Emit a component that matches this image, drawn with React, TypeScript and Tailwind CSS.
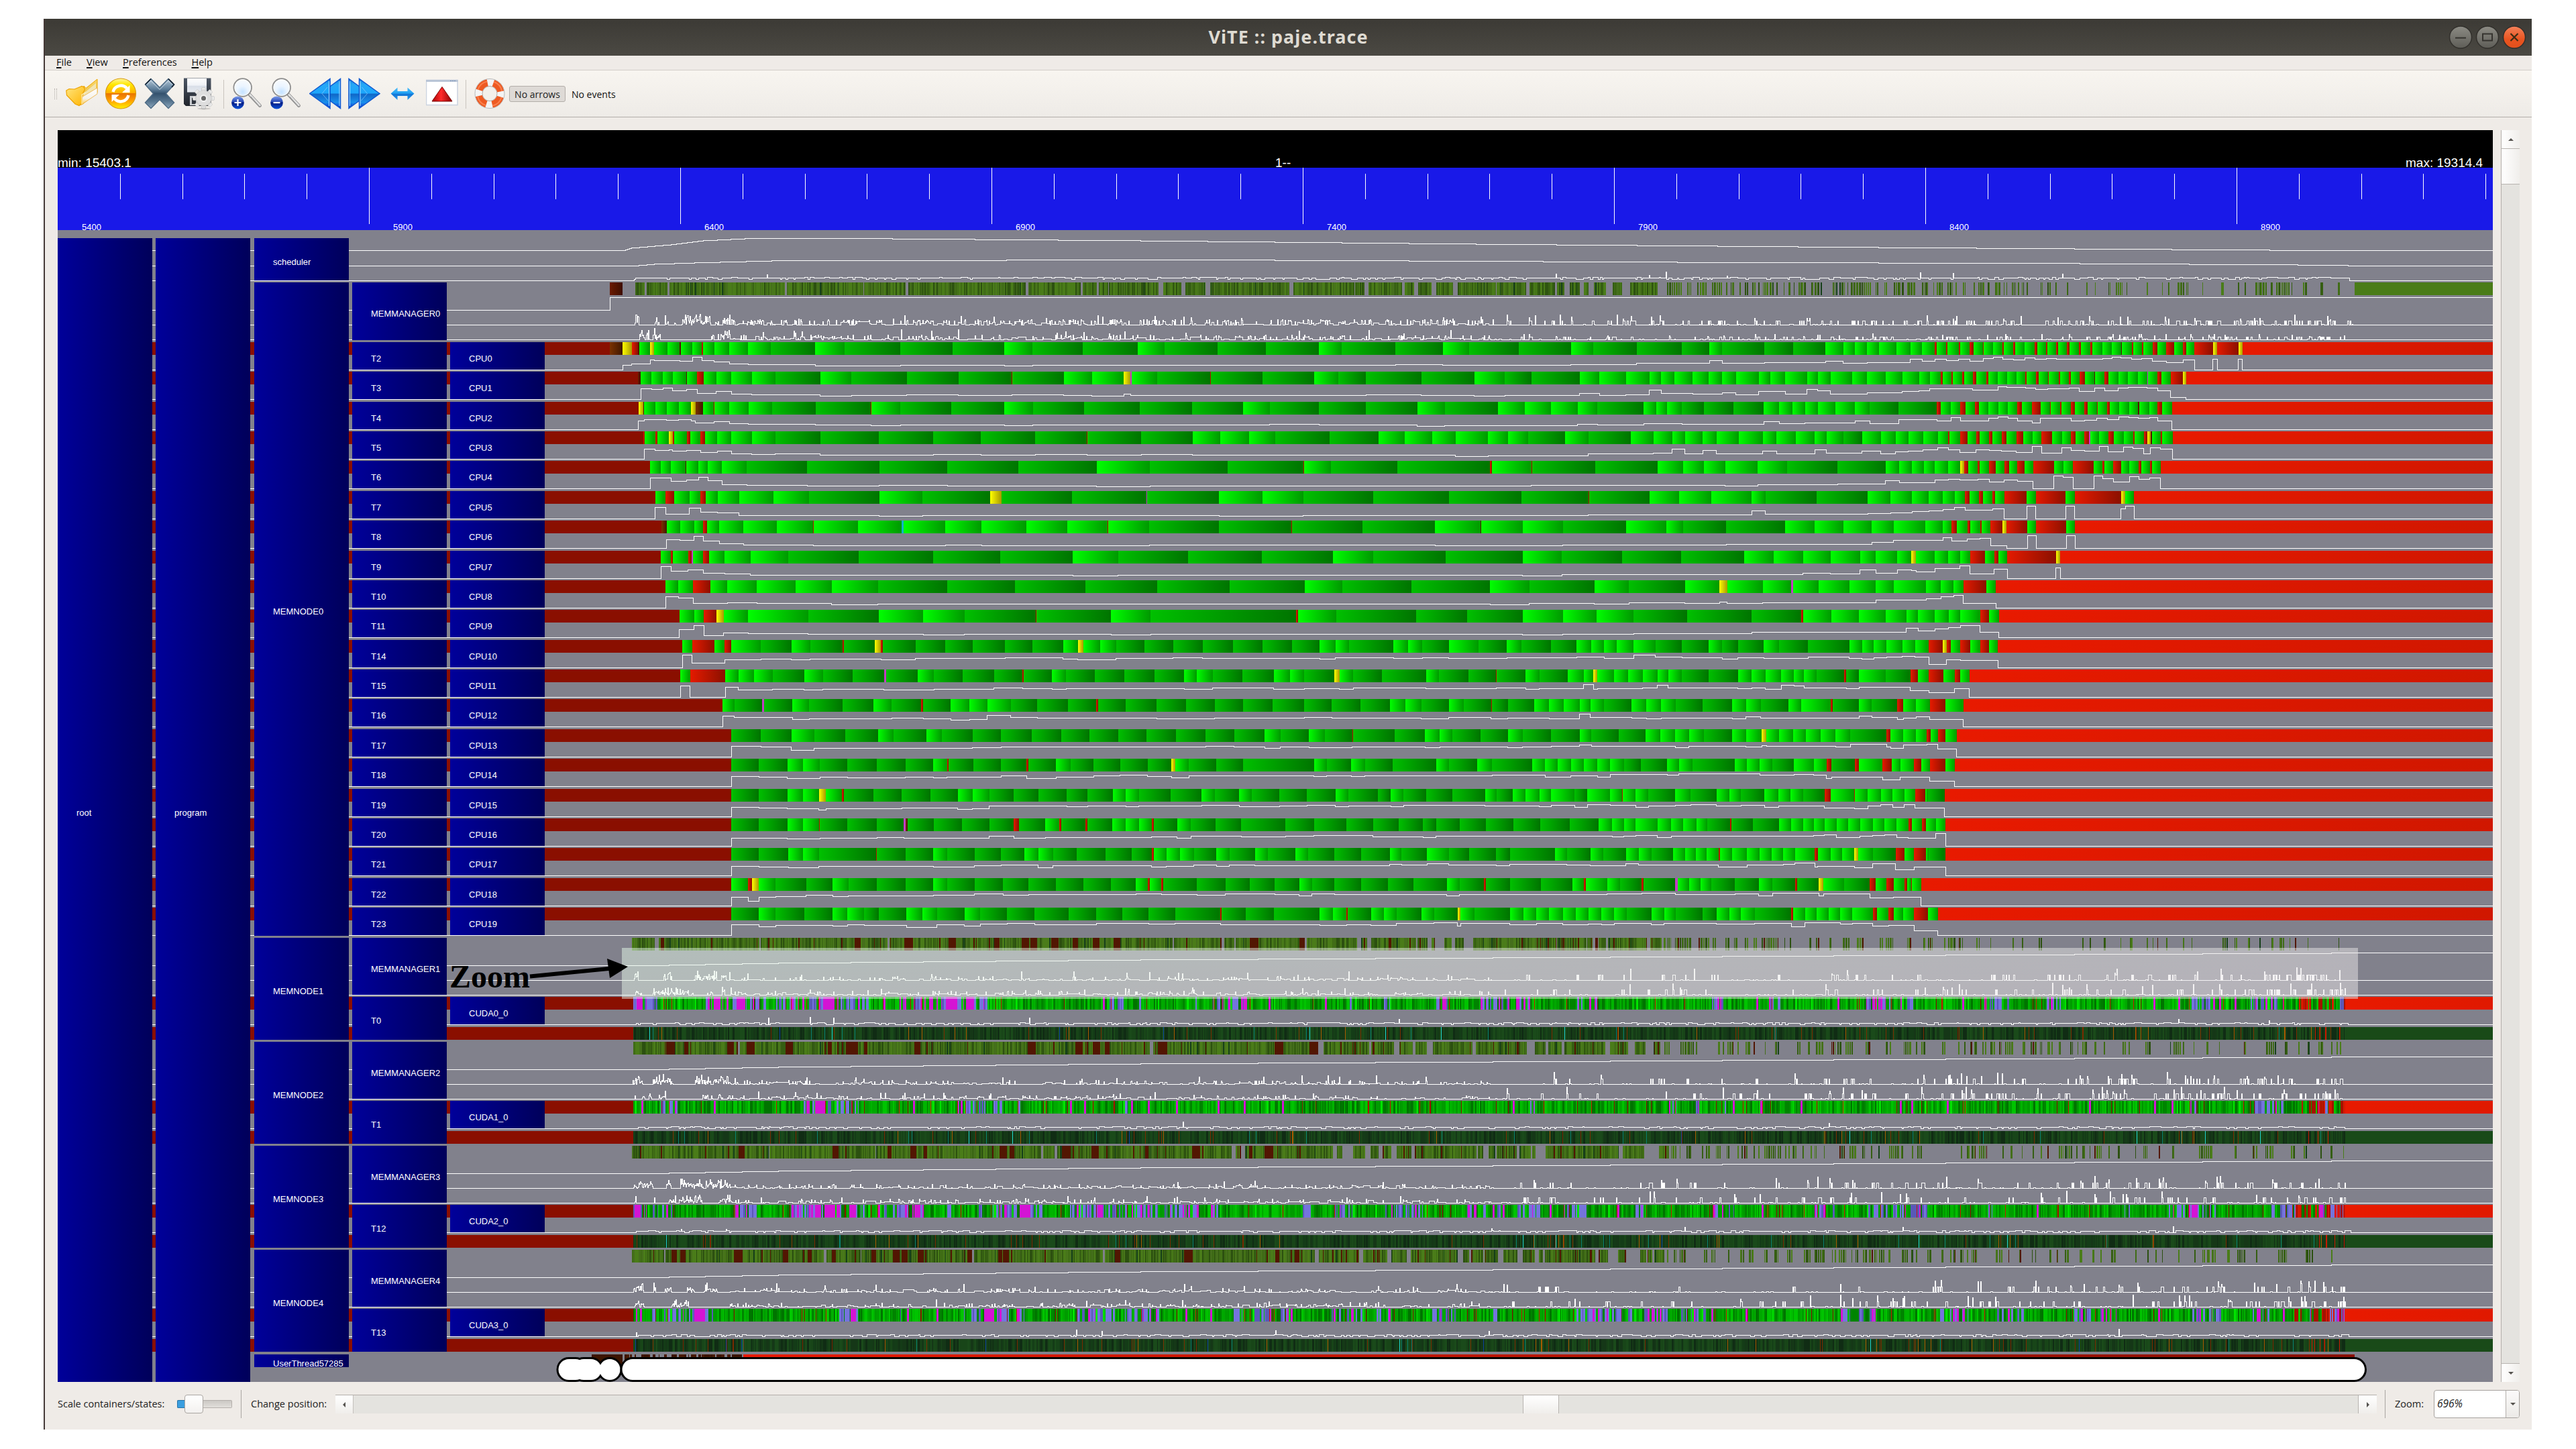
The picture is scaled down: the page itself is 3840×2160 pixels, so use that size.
import React from "react";

/* ------------------------------------------------------------------ */
/* Helpers                                                             */
/* ------------------------------------------------------------------ */

type Seg = { c: string; x: number; h?: number };

// Deterministic generator for the densely packed event rows.
function rng(seed: number) {
  let a = seed * 7919 + 13;
  return () => {
    a = (a + 0x6d2b79f5) | 0;
    let t = Math.imul(a ^ (a >>> 15), 1 | a);
    t = (t + Math.imul(t ^ (t >>> 7), 61 | t)) ^ t;
    return ((t ^ (t >>> 14)) >>> 0) / 4294967296;
  };
}

// "g146/9" = state g starting at 146, load curve moves to level 9.
function parse(origin: number, zoom: number, s: string): Seg[] {
  if (!s) return [];
  return s.split(" ").map((t) => {
    const [a, b] = t.slice(1).split("/");
    return { c: t[0], x: origin + Number(a) / zoom, h: b === undefined ? undefined : Number(b) };
  });
}
const early = (s: string) => parse(860, 1.568, s);
const mid = (s: string) => parse(860, 0.68174, s);
const late = (s: string) => parse(2900, 1.7422, s);

const LEFT = 86;
const RIGHT = 3716;

const FILLS: Record<string, string> = {
  g: "url(#gg)",
  d: "url(#gd)",
  r: "url(#gr)",
  m: "url(#gm)",
  b: "url(#gb)",
  y: "url(#gy)",
  v: "#c43cc4",
  c: "#10b4c8",
  R: "url(#gR)",
};

const CPU: { t: string; c: string; segs: Seg[] }[] = [
  {
    t: "T2", c: "CPU0",
    segs: [
      ...early("b77 y107/7 r128/9 m142 g146 y171/15 g181/14 g211 m240/13 g243 g270/19 r292/14 g295 g321/12 g356/9 g400/8 d453 g557/6 d626 d756/7 d878 g999/6 d1065/7 d1182 g1311 d1374 d1497"),
      ...mid("d700 g754 d777 d832/8 g880/7 d907 d957 g1010/8 d1033 d1077/10 d1123 g1151/14 d1164/10 d1207/11 d1236 g1269/13 g1287/10 g1299 g1311/11 g1323 g1341 g1355/16 g1367/13 r1380/16 g1382"),
      ...late("r2/14 g6 r34/16 g38 r63/13 g73 r98/17 g100 g124/19 r148/16 g152 r176/15 g182 g206/18 r232/16 g238 r262/17 g265 r288/16 g293 r316 g322 r346 g352 r376 g382 g408/17 g432/19 m456/18 g458 r484/16 g488 r510/17 g514 r538/13 g551 r574/11 g594 r617/15 g625 r647/0 y695/16 r706/0 y761/16 R771/0"),
    ],
  },
  {
    t: "T3", c: "CPU1",
    segs: [
      ...early("m142 g149/16 g174/15 g201/17 g224/13 m256 g257/15 r281/9 g297 g326/12 g361/8 g409/7 d464 g569/5 d642/6 d771/7 d892/6 r1016/7 d1018 g1138/6 g1204/5 y1278/8 v1294/6 g1296 d1356 r1480 d1482"),
      ...mid("d697 g749 d774 d802/7 d858/6 g912/5 d943/6 d970 g1019/9 g1039/6 g1066/7 g1090/14 g1102/9 g1115 g1134/8 g1150 g1164/10 g1178/7 g1201/12 g1213 g1228/8 g1250/15 g1261/13 g1274/8 g1296 g1311/10 g1330 g1347/12 g1364/13 g1375/16 r1386 g1388"),
      ...late("r16/16 g19 r44 g49 r71/14 g80 r106 g112 g136/19 g160/18 g185 r208/17 g211 r235/15 g242 r266/16 g269 r294 g298 r321/17 g326 r348/12 g362 m387/17 g389 r413/13 g423 g449/17 g474/18 g500 v524/17 g526 r551/13 g561 r585/3 y617 R625/0"),
    ],
  },
  {
    t: "T4", c: "CPU2",
    segs: [
      ...early("y144/13 m155 g157/15 g183 g210/14 g238/15 y267/13 b277/10 g295 r320 g321/12 g356/9 g401/8 d456 d558/7 r687/6 g688 d756/7 d875 g999/6 d1066/7 d1185 d1316 d1438 g1557"),
      ...mid("d704/8 d754/7 d802 g854/5 d882/6 g936 g963 g990 g1017/8 d1037/7 g1084/9 g1097 g1108 d1123/8 d1145 d1175 g1206/12 g1222/9 g1235 g1248/10 g1261 g1279 g1299/13 d1314/9 d1343/15 r1382/13 g1386"),
      ...late("g14/18 r39/13 g52 r77 g87 g112/17 g137/19 g162/17 r187/13 g199 r225/10 g247/17 r272 g274 r298 g301 r326/13 g336 r361/14 g369 r393/17 g395 r420/15 g427 g451/19 g477/18 m500/17 g503 g530/18 r551/13 g563 R588/0"),
    ],
  },
  {
    t: "T5", c: "CPU3",
    segs: [
      ...early("r155 g158/15 r183/13 g188 y215/14 r224/12 g227 r257/13 g265 r289/10 g299 g328/12 g361/8 g409/7 d464/8 d569/6 d706 d833/7 d944/6 d1071/7 r1192/6 d1194 d1319/7 g1439/6 g1504"),
      ...mid("g683 d710 d765 g815 g841 g869 g893/4 g926/5 g946 d967 g1004 d1028/8 g1071 g1094/9 g1113/15 g1126/8 g1144/13 g1158/8 g1181 g1205/12 g1219/8 g1239 g1258/14 g1270/9 d1287 g1306/12 g1325/8 g1340/11 g1353/12 g1368/14 g1383/17"),
      ...late("r7/14 g10 r38/10 g57 r80/14 g89 r114/13 g122 r146/12 g159 r184/10 g202 g226/19 r250/9 g277 g303/17 r326/13 g338 r361/12 v373 g376 g399/19 r423/11 g437 g463/18 r487/16 g491 r515/8 y524 m533/17 g537 r559/15 g563 R590/0"),
    ],
  },
  {
    t: "T6", c: "CPU4",
    segs: [
      ...early("g171/16 g196 g220/11 m254 g256/13 g284/17 g306/12 g339/6 d397/5 d538/4 d707/5 d866/4 d1032 g1215/3 d1339/4 d1521"),
      ...mid("r738 g739 d766 d834 r928 g930 r970/5 d971 d1035 g1098 g1124 g1145 g1167/4 g1200/6 d1230 d1281/7 g1330/12 g1344/9 g1357 g1369 g1380/13"),
      ...late("g7/14 y38/13 r49 g59 r84/14 g89 r114/10 g131 r153/13 g165 r187/11 g205 r228/0 g282/19 g306/17 r331/0 g385/19 r408/15 g413 r436/10 g456 g478/18 r502/14 g509 r531/16 g537 R559/0"),
    ],
  },
  {
    t: "T7", c: "CPU5",
    segs: [
      ...early("g183/17 r207/7 g227 g263/16 r289/10 g301 g329/9 g379/5 g459 d543 g707/4 d808/5 y966 d993 d1157 v1331 d1333 g1501/4"),
      ...mid("g697 d738/5 d809 d886 d960 r1028/6 d1029 g1090 g1120 g1153 g1194/12 d1208/7 d1260 g1312/8 g1335/9 g1357/11 g1374/12 g1388/14"),
      ...late("g24/17 r51/13 g63 r87 g98 r122/15 g129 r153/0 g211/19 r235/0 g312/19 r336/0 y456/15 g467/19 R490/0"),
    ],
  },
  {
    t: "T8", c: "CPU6",
    segs: [
      ...early("b198 g210/13 g241/12 g274/18 r295/11 g304 g333/7 g389/5 g467 r552/4 g554 g657 c759 g763 g861/5 g946/4 g1051 g1146 r1240 g1242 d1338/5 d1501"),
      ...mid("r726 d727 d798 g872/4 m918 g919 g961 d1002/5 g1066 g1107 d1124 d1168/6 g1228 g1258 g1287 g1316/9 g1338/12 g1370 g1388/16"),
      ...late("r16/11 g30 r57/14 g64 r90/15 g94 r117/4 y148 r159/0 g213/19 r236/0 g314/19 R337/0"),
    ],
  },
  {
    t: "T9", c: "CPU7",
    segs: [
      ...early("g196/18 r220/11 g224 r260/13 v268 g271 r295/8 g309 g345/7 g406/5 d494 d659 d833 d989 g1159/4 d1265/5 d1428"),
      ...mid("d696 g768 d809 d883 g961/4 d1001/6 d1062 d1122 g1186 g1216 g1246/8 g1274/7 g1304/13 g1320/8 g1342/13 y1356/12 g1361/10 g1380/15"),
      ...late("g7/15 g38/19 r64/7 g103 r127/14 g138 r161/0 y287/16 R298/0"),
    ],
  },
  { t: "T10", c: "CPU8", segs: mid("g90/17 g103/15 r118/7 g136 g153/8 g183/7 g222 g259/5 d306/6 d376 d445 d517 d590 d663 g740 d778 d848 g928/5 d968/7 g1034/6 d1069/8 g1126/7 y1161/9 g1169/7 g1205/8 v1234 g1236 g1262 g1293 g1320/12 g1338 g1371/14 g1386/17 g1399/19 r1409/7 g1432 R1442/0") },
  { t: "T11", c: "CPU9", segs: mid("g104/12 g119/18 r129/3 y142 g149/7 g174/6 d235/5 g307 g352/4 d394/5 r466 d467 g543/4 d583/5 r731 g733 d772 d853 d905 g961/4 g1002/5 g1036 d1074/6 d1128 d1194/8 r1244 g1246 g1275 g1303 g1330/8 g1351/14 g1363/10 g1380/13 g1394/15 g1406/18 r1426/8 g1435 R1445/0") },
  { t: "T14", c: "CPU10", segs: mid("g107/19 r117/7 g140 r150/12 g157 d187/13 g218/12 d237/13 r270 d271 y303 r309/12 d311 d344/14 d374 d402 d435/15 d463 g494/13 y509/12 g515 g532 d548/14 d577 d606/15 d636/14 d667 d697 d727 g755/13 g771/15 d785 g830/14 g845 d859/15 g886/14 d916 g945/15 d960 d990 g1016/16 g1031 g1044/14 g1057 g1074/19 d1096/16 d1123/15 g1150 d1164/13 d1180/15 g1206/14 d1222 d1251/16 g1293/14 g1306/13 g1318/15 g1331/16 g1347/17 g1360/16 r1374/5 y1388 r1392/12 g1396 r1406/11 g1416 r1426 g1435 R1444/0") },
  { t: "T15", c: "CPU11", segs: mid("g105/17 r115/0 g151/15 g164/11 g180 d199/12 g231/11 d250/12 d280 v312/11 d314 g346 d363/12 d392 d424/14 r453/13 d454 g483/12 d497/13 d526 d556 d587 g617/12 g630 d646/14 d676 g708/12 g725 d739/13 y770 g775/12 d789/14 d818 g863/13 d876 d906 r934/14 d935 g964/12 d978/13 g1007 g1023/19 y1033/12 g1037/13 g1054 g1068 g1083/14 g1098/18 g1109/14 d1123 d1150 g1180/13 g1194/14 g1208/12 g1224/18 g1237/17 g1247/14 d1260 r1288 d1290/13 g1303/15 d1330 r1355/10 g1363 r1374/7 g1389 r1400/13 g1406 R1415/0") },
  { t: "T16", c: "CPU12", segs: mid("g148/16 d160/14 v188 d190 g219/11 d236/12 d270 g301/12 d320/13 r350 d352/12 g380/10 g399/11 g417/17 d441/14 d468/13 d499 r528 d530 d558 d589/12 d619 d648/13 d677 d707 d739/14 d767/13 d796 g826 g842 d858/12 g886/14 d901 r929/12 d930 d946/13 g973 g988/12 g1003 g1019/19 g1030/14 d1044 g1072/13 g1087/12 g1102/13 d1117 d1144 g1174/12 g1188/15 d1203/13 g1231 g1244 r1274/13 d1276 g1303/16 d1316/14 r1342/11 g1348/13 g1361/15 r1375/11 g1391 R1409/0") },
  { t: "T17", c: "CPU13", segs: mid("d157/16 d187/15 g218/10 d241/13 d273 g306 d322 g355 d371 d402/14 d431/15 d462 d492 d521 d550 d579 d609 d639/16 d668/15 g699/13 d715/15 g744/14 d760 r788/15 d789 d831 g862/14 g877/15 d890 d918 g946/14 d961/15 d990/16 g1019/18 d1031/16 d1059 g1086 g1101 g1116/14 g1130/16 d1145 g1174 g1188/15 y1204/17 g1209/16 g1222 g1236 g1249 g1264 g1279/15 d1294/19 r1331/15 g1335/13 g1348/18 g1361 r1372/19 g1376 r1383/12 g1391 R1402/0") },
  { t: "T18", c: "CPU14", segs: mid("d157/15 d185/14 g214/12 g230 d247/14 d275/13 d305 d334/14 g362/13 r376/14 d378 d403 d431/16 r457/12 d459 g487/14 d502 d525/16 d552/17 d580/15 y604/13 g608 d622/16 d650 d677 g749/15 d762/16 g787/15 d801/16 d829 g873 d886 g915 d930/17 g971 g984/14 g997 g1010/16 g1023 g1037/14 g1050/18 d1064 d1081 g1108/17 g1120/19 d1134 g1177 g1189 g1202/17 d1215 g1237/18 g1257/17 r1270/12 d1275/14 r1299 g1303 r1327/10 g1336 g1345/14 r1359 g1366 r1375/8 g1391 R1400/0") },
  { t: "T19", c: "CPU15", segs: mid("d157/14 d185/13 g214/12 g230 y246/10 g253/12 r269 d271 d301 d330/13 d359 g387/11 g402/12 d419/16 d444 d469 d498/15 d519/16 g545 g558/15 d571/16 d603 g635/17 d648 g673/15 d686 d714/16 d742/17 g771/15 d784/16 d814 g827/15 d840/17 d863 d890 g923/16 d935 g951 g964 g978/15 g990/17 d1014/14 g1027/18 g1050/17 r1062 g1063 g1076/14 d1089/16 g1116/17 d1132/18 g1158/16 g1171 d1183/17 g1207/14 g1221/16 g1233 d1246 r1268/13 g1274 r1298/12 g1299 g1312/16 g1325/18 g1337/14 g1349/18 r1360/13 g1370 d1373 R1390/0") },
  { t: "T20", c: "CPU16", segs: mid("d157/12 d185 g214/11 g230 r246 d247/12 d275 d305/13 v332/12 b334 d336 d363 d391 d419/15 r444/12 d449 g476/13 r490 d492 r517 d519 g544 g558 g571 r584/14 d586 g610/12 d624/15 d649 d675/14 d720/15 d749/16 d782 d809/14 d835 d860/13 d873/15 d897 d924 d952 d979 d1009 g1038 g1052/14 g1064/15 g1076/16 g1098/13 g1112/15 g1124 g1138 d1149 r1172/15 d1173 d1195 g1222 g1234 g1246 g1257/16 g1268/17 g1280/13 g1292 g1304/15 g1317/16 g1329/17 g1341/13 r1353/12 g1357 r1367 g1371 g1381/19 R1391/0") },
  { t: "T21", c: "CPU17", segs: mid("d157/14 d185/13 g215/12 g230 d246/14 r304 d305 d334 g362/13 d376 d404/15 d431/16 g455 g469/12 d484/15 d508 d537 d564 r584/13 g586 g599/14 g613 d627/16 g650/14 d663/16 g689/15 d702 g730 d743 d770 d797/15 g826/17 d838/16 g864/18 d886/16 d907 d934/15 d948/17 g994 d1006/16 g1030/15 d1043 g1066/18 g1079/16 d1092 g1114 g1126 g1137 g1148 r1160/13 g1162 g1174 g1189/16 g1202 g1214 g1226/17 g1238/19 r1258/13 g1261/14 g1274 g1286 y1298/12 g1302 d1317/18 r1340/9 g1349 r1359/13 g1371 d1374 R1391/0") },
  { t: "T22", c: "CPU18", segs: mid("g157/13 r174/7 y178 g185/13 d202/14 d233/16 g260/14 d276/15 d305 d334 g362/16 d376 d404/18 d433/16 d459/17 d487 d515 d543 g568/18 r580 g582 r594/17 d596 d630/16 d659/18 d684 d709/17 g734/15 d747/18 d770/17 d797 d824 d850 g884/15 d897/17 r922 d924 d948 d980 g1012 r1023 g1025 g1047/18 d1060 r1082/19 d1084 v1116/17 g1119 g1130 g1142 d1153 d1177/18 g1201/15 d1215/19 r1238 d1240 y1262/15 g1267/18 d1288 r1314/12 g1320 r1331 g1338/13 r1349 g1352 r1356 g1357 R1366/0") },
  { t: "T23", c: "CPU19", segs: mid("d157/16 g185/13 d202/15 d231 g260/14 g275/16 d292/15 d307 g335/12 g351 d366/16 g394/14 d410/17 d437/18 d465/16 d500 d528/18 d554 d581/17 d608/18 r654/16 d655 d680 d708 g755/15 g768 r782/16 d783 g807/15 g820 d833/18 g858 d871/19 y895/14 g898/18 d912 g948/16 g962 g975/18 g988 g1002/16 g1015 g1028/17 g1041/16 g1054/18 d1067 g1092/16 g1105/18 d1117 d1144 g1158/17 g1171 g1183 d1197/18 r1234/13 g1236 g1248/19 g1260 g1272 g1284/17 g1296/18 r1317/14 g1321 r1333/15 g1338 g1348 r1359/7 g1373 R1383/0") },
];

function stepPath(base: number, pts: [number, number][]) {
  let d = `M${LEFT} ${base}`;
  for (const [x, h] of pts) d += `H${x.toFixed(1)}V${(base - h).toFixed(1)}`;
  return d + `H${RIGHT}`;
}

const Curve = ({ d }: { d: string }) => <path d={d} fill="none" stroke="#fff" strokeWidth={1} />;

// Groups 1-to-n pixel wide stripes of one row into a path per colour.
class Stripes {
  paths: Record<string, string> = {};
  constructor(public y: number, public h = 19) {}
  add(color: string, x: number, w: number) {
    this.paths[color] = (this.paths[color] || "") + `M${x} ${this.y}h${w}v${this.h}h${-w}z`;
  }
  render() {
    return Object.entries(this.paths).map(([c, d]) => <path key={c} d={d} fill={c} />);
  }
}

function memoryRow(seed: number, y: number, brown: boolean, start: number) {
  const r = rng(seed);
  const s = new Stripes(y);
  const greens = ["#4a7c19", "#3f6c15", "#355e12", "#456f1c", "#2c5010", "#4a7c19"];
  let x = start;
  const end = 3494;
  while (x < end) {
    const t = (x - start) / (end - start);
    const fill = brown ? (t < 0.3 ? 0.93 : 0.93 - (t - 0.3) * 1.1) : t < 0.3 ? 0.85 : 0.85 - (t - 0.3) * 0.85;
    if (r() < Math.max(fill, 0.28)) {
      const run = t < 0.6 ? 3 + Math.floor(r() * 14) : 1 + Math.floor(r() * 2.5);
      const stop = x + run;
      while (x < stop) {
        const w = 1 + Math.floor(r() * 2);
        const k = r();
        if (brown && k < 0.06) {
          const bw = t < 0.4 && r() < 0.4 ? 5 + Math.floor(r() * 9) : 1 + Math.floor(r() * 2);
          s.add("#521602", x, bw);
          x += bw;
        } else {
          s.add(k > 0.97 ? "#16401a" : greens[Math.floor(r() * greens.length)], x, w);
          x += w;
        }
      }
      if (t >= 0.6) x += 1;
    } else x += 1 + Math.floor(r() * (t < 0.3 ? 5 : 8));
  }
  return s.render();
}

function kernelRow(seed: number, y: number, violet: number) {
  const r = rng(seed);
  const s = new Stripes(y);
  const end = 3496;
  const greens = ["#009c00", "#00b400", "#008400", "#00a800", "#007400", "#00c400"];
  let x = 944;
  let mood = 1;
  while (x < end) {
    const t = (x - 944) / (end - 944);
    if (r() < 0.09) mood = r() < (t < 0.28 ? violet + 0.12 : violet) ? 1 : 0;
    const k = r();
    let w = 1 + Math.floor(r() * 3);
    let c = greens[Math.floor(r() * greens.length)];
    if (mood && k < 0.55) {
      c = k < 0.3 ? "#7474dc" : k < 0.43 ? "#5a58b8" : "#d414d4";
      if (c === "#d414d4" && t < 0.28 && r() < 0.16) w = 8 + Math.floor(r() * 10);
    } else if (k > 0.955) {
      c = r() < 0.5 ? "#c81800" : "#8a1000";
      w = 1;
    } else if (!mood && k < 0.012) {
      c = "#d414d4";
      w = 3;
    } else if (k > 0.93) c = "#00e400";
    if (t > 0.97 && k > 0.5) c = k > 0.75 ? "#d81800" : "#a41200";
    s.add(c, x, w);
    x += w;
  }
  return s.render();
}

function workerRow(seed: number, y: number) {
  const r = rng(seed);
  const s = new Stripes(y);
  const base = ["#184518", "#143c17", "#102c14", "#1a4a1a", "#153717"];
  let x = 944;
  while (x < 3496) {
    const k = r();
    let w = 1 + Math.floor(r() * 3);
    let c = base[Math.floor(r() * base.length)];
    if (k < 0.035) { c = "#7a2a00"; w = 1; }
    else if (k < 0.05) { c = "#a85a00"; w = 1; }
    else if (k < 0.067) { c = "#088272"; w = 1; }
    else if (k < 0.07) { c = "#20d8d0"; w = 1; }
    else if (k < 0.073) { c = "#0a40a0"; w = 1; }
    if (x > 3440 && k > 0.85) { c = "#c81800"; w = 1; }
    s.add(c, x, w);
    x += w;
  }
  return s.render();
}

// Bandwidth-like signal: bursty at first, low in the middle, spiky at the end.
function burst(seed: number, base: number, start: number, first: number, low: number, tail: number, dense: number, end = 3496) {
  const r = rng(seed);
  let d = `M${LEFT} ${base}H${start}`;
  let x = start;
  let level = 1;
  let active = true;
  let spike = 0;
  while (x < end) {
    const t = (x - start) / (end - start);
    let h: number;
    let w = 1;
    if (x < start + 145) {
      if (r() < 0.07) active = !active;
      h = active ? r() * first * (r() < 0.4 ? 1 : 0.5) : 0;
    } else if (t < 0.5) {
      w = 1 + Math.floor(r() * 3);
      if (r() < 0.45) level = Math.floor(r() * r() * (low + 2));
      h = level;
      if (r() < 0.02) {
        h = first * (0.5 + r() * 0.4);
        w = 1;
      } else if (r() < 0.1 + dense) {
        h = low + r() * 3;
        w = 1;
      }
    } else {
      const p = dense + 0.04 + (t - 0.5) * 0.5;
      if (spike > 0) {
        spike--;
        h = r() < 0.5 ? tail * 0.45 : 0;
      } else if (r() < p * 0.6) {
        spike = Math.floor(r() * 5);
        h = r() < 0.7 ? tail * 0.45 : tail * (0.6 + r() * 0.5);
      } else {
        h = r() < 0.12 ? 1 : 0;
        w = 1 + Math.floor(r() * 3);
      }
    }
    d += `V${base - Math.round(h)}H${x + w}`;
    x += w;
  }
  return d + `V${base}H${RIGHT}`;
}

// Slowly varying counter: nearly flat with rare peaks.
function flat(seed: number, base: number, start: number, level: number, floor: number, peaks: number, end = 3496) {
  const r = rng(seed);
  let d = `M${LEFT} ${base}H${start}`;
  let x = start;
  while (x < end) {
    const k = r();
    const p = x < start + 200 ? peaks * 3 : peaks;
    const h = k < p ? level + 3 + r() * 6 : k < 0.35 ? floor : level + (r() < 0.2 ? 1 : 0);
    const w = k < p ? 1 : 2 + Math.floor(r() * (k < 0.35 ? 3 : 10));
    d += `V${base - Math.round(h)}H${x + w}`;
    x += w;
  }
  return d + `V${base}H${RIGHT}`;
}

function ramp(base: number, pts: [number, number][]) {
  let d = `M${LEFT} ${base}`;
  for (let i = 1; i < pts.length; i++) {
    const [x0, h0] = pts[i - 1];
    const [x1, h1] = pts[i];
    const n = Math.max(1, Math.abs(h1 - h0));
    for (let k = 1; k <= n; k++)
      d += `H${(x0 + ((x1 - x0) * k) / n).toFixed(0)}V${base - Math.round(h0 + ((h1 - h0) * k) / n)}`;
  }
  return d + `H${RIGHT}`;
}

/* ------------------------------------------------------------------ */
/* Trace view                                                          */
/* ------------------------------------------------------------------ */

const COL = [86, 232, 379, 525, 671];

function Box({ col, y, b, label, w = 141 }: { col: number; y: number; b: number; label: string; w?: number }) {
  return (
    <g>
      <rect x={COL[col]} y={y} width={w} height={b - y} fill="url(#navy)" />
      <text x={COL[col] + 28} y={Math.floor((y + b) / 2 + 8.5)} fontSize={13} fill="#fff">
        {label}
      </text>
    </g>
  );
}

function CpuRow({ i }: { i: number }) {
  const { segs } = CPU[i];
  const y = Math.round(510 + 44.37 * i);
  const pts = segs.filter((s) => s.h !== undefined).map((s) => [s.x, s.h!] as [number, number]);
  return (
    <g>
      <rect x={LEFT} y={y} width={segs[0].x - LEFT} height={19} fill="#8a0f00" />
      {segs.map((s, k) => {
        const next = k + 1 < segs.length ? segs[k + 1].x : RIGHT;
        const a = Math.round(s.x);
        const w = Math.max(1, Math.round(next) - a);
        return <rect key={k} x={a} y={y} width={w} height={19} fill={FILLS[s.c]} />;
      })}
      <Curve d={stepPath(y + 41.5, pts)} />
    </g>
  );
}

const GPU = [
  { y: 1398, id: 1, t: "T0", cuda: "CUDA0_0", violet: 0.34 },
  { y: 1553, id: 2, t: "T1", cuda: "CUDA1_0", violet: 0.14 },
  { y: 1708, id: 3, t: "T12", cuda: "CUDA2_0", violet: 0.36 },
  { y: 1863, id: 4, t: "T13", cuda: "CUDA3_0", violet: 0.28 },
];

function GpuRows({ y, id, violet }: { y: number; id: number; violet: number }) {
  return (
    <g>
      {memoryRow(id * 11, y, true, 942)}
      <Curve d={ramp(y + 41.5, [[942, 0], [1160, 4], [1700, 9], [2400, 13], [2900, 16], [3475, 19]])} />
      <Curve d={burst(id * 5 + 1, y + 63.5, 943, 15, 3, 17, 0.02)} />
      <Curve d={burst(id * 5 + 2, y + 85.5, 946, 12, 3, 17, 0.02)} />
      <rect x={LEFT} y={y + 88} width={858} height={19} fill="#8a0f00" />
      {kernelRow(id * 17, y + 88, violet)}
      <rect x={3496} y={y + 88} width={220} height={19} fill="url(#gR2)" />
      <Curve d={flat(id * 23, y + 129.5, 948, 2, 0, 0.006)} />
      <rect x={LEFT} y={y + 133} width={858} height={19} fill="#8a0f00" />
      {workerRow(id * 29, y + 133)}
      <rect x={3496} y={y + 133} width={220} height={19} fill="#194a18" />
    </g>
  );
}

function userThread() {
  const r = rng(77);
  const s = new Stripes(2019, 19);
  s.add("#3c1400", 882, 46);
  let x = 930;
  while (x < 1106) {
    const w = 1 + Math.floor(r() * 4);
    if (r() < 0.72) s.add(r() < 0.5 ? "#4a1a02" : "#3c1400", x, w);
    x += w;
  }
  return s.render();
}

const Grad = ({ id, a, b }: { id: string; a: string; b: string }) => (
  <linearGradient id={id}>
    <stop offset="0" stopColor={a} />
    <stop offset="1" stopColor={b} />
  </linearGradient>
);

const CAPS: [number, number][] = [[830, 876], [852, 899], [891, 927], [925, 3528]];

function TraceView() {
  const ticks = Array.from({ length: 39 }, (_, k) => k + 1);
  return (
    <svg
      className="block h-[1866px] w-[3630px] shrink-0 bg-[#81818c]"
      viewBox="86 194 3630 1866"
      fontFamily='"Liberation Sans", Arial, sans-serif'
      shapeRendering="crispEdges"
    >
      <defs>
        <Grad id="gg" a="#00ff00" b="#009900" />
        <Grad id="gd" a="#00c000" b="#007400" />
        <Grad id="gr" a="#e51a00" b="#8a1000" />
        <Grad id="gR" a="#e81a00" b="#d01700" />
        <Grad id="gR2" a="#e81a00" b="#e01900" />
        <Grad id="gm" a="#6a1a00" b="#3e0e00" />
        <Grad id="gb" a="#7a3200" b="#401800" />
        <Grad id="gy" a="#ffff00" b="#a89800" />
        <Grad id="navy" a="#00009a" b="#00005a" />
        <Grad id="ut" a="#e81a00" b="#8a0f00" />
        <linearGradient id="veil" x1="0" y1="0" x2="1" y2="0.3">
          <stop offset="0" stopColor="#e4fae8" />
          <stop offset="0.55" stopColor="#e8ebe6" />
          <stop offset="1" stopColor="#e8e4e6" />
        </linearGradient>
      </defs>

      {/* time ruler */}
      <rect x={86} y={194} width={3630} height={56} fill="#000" />
      <rect x={86} y={250} width={3630} height={93} fill="#1919e8" />
      {ticks.map((n) => {
        const x = Math.round(85.9 + 92.8 * n);
        return n % 5 === 0 ? (
          <rect key={n} x={x} y={250} width={1} height={84} fill="#fff" />
        ) : (
          <rect key={n} x={x} y={259} width={1} height={38} fill="#fff" />
        );
      })}
      {[5400, 5900, 6400, 6900, 7400, 7900, 8400, 8900].map((v, k) => (
        <text key={v} x={122 + 464 * k} y={342.5} fontSize={13} fill="#fff">
          {v}
        </text>
      ))}
      <g fontSize={19} fill="#fff">
        <text x={86} y={249}>min: 15403.1</text>
        <text x={1901} y={249}>1--</text>
        <text x={3586} y={249}>max: 19314.4</text>
      </g>

      {/* scheduler */}
      <Curve d={ramp(373.5, [[929, 0], [941, 4], [1000, 9], [1048, 15], [1110, 18], [1330, 17], [1700, 14], [2200, 9], [2800, 4], [3383, 0]])} />
      <Curve d={ramp(396.5, [[941, 0], [975, 3], [1035, 5], [1150, 8], [1500, 9], [1900, 8], [2500, 5], [3100, 3], [3425, 1], [3500, 0]])} />
      <Curve d={flat(301, 418.5, 945, 4, 2, 0.012, 3500)} />

      {/* main memory manager */}
      <rect x={909} y={421} width={19} height={19} fill="url(#gm)" />
      {memoryRow(4, 421, false, 947)}
      <rect x={3510} y={421} width={206} height={19} fill="#4a7c18" />
      <Curve d={stepPath(462.5, [[909, 19]])} />
      <Curve d={burst(91, 484.5, 946, 16, 5, 14, 0.22, 3508)} />
      <Curve d={burst(92, 506.5, 943, 17, 4, 8, 0.08, 3496)} />

      {CPU.map((_, i) => (
        <CpuRow key={i} i={i} />
      ))}
      {GPU.map((g) => (
        <GpuRows key={g.id} y={g.y} id={g.id} violet={g.violet} />
      ))}
      {userThread()}
      <rect x={1108} y={2019} width={2402} height={19} fill="url(#ut)" />

      {/* container tree */}
      <rect x={86} y={355} width={141} height={1705} fill="url(#navy)" />
      <rect x={232} y={355} width={141} height={1705} fill="url(#navy)" />
      <g fontSize={13} fill="#fff">
        <text x={114} y={1216}>root</text>
        <text x={260} y={1216}>program</text>
      </g>
      <Box col={2} y={355} b={418} label="scheduler" />
      <Box col={2} y={421} b={1395} label="MEMNODE0" />
      <Box col={3} y={421} b={507} label="MEMMANAGER0" />
      {CPU.map(({ t, c }, i) => {
        const y = Math.round(510 + 44.37 * i);
        return (
          <g key={t}>
            <Box col={3} y={y} b={y + 41} label={t} />
            <Box col={4} y={y} b={y + 41} label={c} />
          </g>
        );
      })}
      {GPU.map(({ y, id, t, cuda }) => (
        <g key={id}>
          <Box col={2} y={y} b={y + 152} label={`MEMNODE${id}`} />
          <Box col={3} y={y} b={y + 85} label={`MEMMANAGER${id}`} />
          <Box col={3} y={y + 88} b={y + 152} label={t} />
          <Box col={4} y={y + 88} b={y + 129} label={cuda} />
        </g>
      ))}
      <Box col={2} y={2019} b={2038} label="UserThread57285" />

      {/* annotations */}
      <rect x={927} y={1413} width={2588} height={76} fill="url(#veil)" opacity={0.5} />
      <text x={670} y={1472} fontSize={48} fontWeight={700} fontFamily='"Liberation Serif", "Times New Roman", serif'>
        Zoom
      </text>
      <g shapeRendering="auto">
        <path d="M790 1455.5L912 1443.5" stroke="#000" strokeWidth={6} />
        <path d="M905 1429L936 1441L909 1458Z" />
        {CAPS.slice(0, 3).map(([a, b]) => (
          <rect key={a} x={a + 1} y={2024.5} width={b - a - 2} height={34} rx={17} stroke="#000" strokeWidth={3} />
        ))}
        {CAPS.slice(0, 3).map(([a, b]) => (
          <rect key={a} x={a + 2.5} y={2026} width={b - a - 5} height={31} rx={15.5} fill="#fff" />
        ))}
        <rect x={926} y={2024.5} width={2600.5} height={34} rx={17} fill="#fff" stroke="#000" strokeWidth={3} />
      </g>
    </svg>
  );
}

/* ------------------------------------------------------------------ */
/* Toolbar icons                                                       */
/* ------------------------------------------------------------------ */

const VGrad = ({ id, stops }: { id: string; stops: [number, string][] }) => (
  <linearGradient id={id} x1="0" y1="0" x2="0" y2="1">
    {stops.map(([o, c], i) => (
      <stop key={i} offset={o} stopColor={c} />
    ))}
  </linearGradient>
);

const Icon = ({ children }: { children: React.ReactNode }) => (
  <svg viewBox="0 0 48 48" className="size-12 shrink-0">
    {children}
  </svg>
);

const OpenIcon = () => (
  <Icon>
    <defs>
      <linearGradient id="fo1" x1="0" y1="0" x2="1" y2="1">
        <stop offset="0" stopColor="#ffe680" />
        <stop offset="1" stopColor="#ffb400" />
      </linearGradient>
      <VGrad id="fo2" stops={[[0, "#f8d66a"], [1, "#e8b93c"]]} />
      <VGrad id="fo3" stops={[[0, "#ffffff"], [0.6, "#f6f2ea"], [1, "#ffc83c"]]} />
    </defs>
    <path d="M24 24L27 12L30 15.5L47 2V22L24 40Z" fill="url(#fo2)" stroke="#f0a800" />
    <path d="M27 23L45 8V17L26 30Z" fill="#f2e4b4" />
    <path d="M25 28L47 15V24L22 41Z" fill="url(#fo3)" stroke="#eab040" strokeWidth=".8" />
    <path d="M.8 19L5 16.500L13 17L24 12.500L27 14L28.500 17.500L24.500 25L24 38L20 41.500L14 39L1.500 26Z" fill="url(#fo1)" stroke="#eda200" strokeWidth="1.2" />
    <path d="M24 39V25L30 21.500" fill="none" stroke="#fff3c0" strokeWidth="1.200" />
  </Icon>
);

const ReloadIcon = () => (
  <Icon>
    <defs>
      <VGrad id="re" stops={[[0, "#fff6a0"], [0.2, "#ffe800"], [0.48, "#ffb000"], [0.5, "#e87400"], [0.72, "#ff9c00"], [1, "#fff200"]]} />
    </defs>
    <circle cx="24" cy="23.500" r="22.500" fill="url(#re)" stroke="#d89a10" strokeWidth="1.2" />
    <path d="M12.500 21A12 12 0 0 1 33 15.500" fill="none" stroke="#fff" strokeWidth="4.500" />
    <path d="M37.500 11V22H26Z" fill="#fff" />
    <path d="M35.500 26A12 12 0 0 1 15 31.500" fill="none" stroke="#fff" strokeWidth="4.500" />
    <path d="M10.500 36V25H22Z" fill="#fff" />
  </Icon>
);

const CloseIcon = () => (
  <Icon>
    <defs>
      <VGrad id="cl" stops={[[0, "#b4c8d8"], [0.35, "#5f7f9a"], [0.5, "#34526e"], [0.75, "#56748e"], [1, "#8ca6bc"]]} />
    </defs>
    <path d="M2.500 10L11 1.500L24 14.500L37 1.500L45.500 10L33.500 23.500L45.500 37L37 45.500L24 32.500L11 45.500L2.500 37L14.500 23.500Z" fill="url(#cl)" stroke="#4e6b85" strokeWidth="1.500" />
    <path d="M2.500 10L11 1.500M37 1.500L45.500 10L42 14" fill="none" stroke="#0e1c2a" strokeWidth="1.600" />
    <path d="M5 10.500L11 4.500L24 17.500L37 4.500L43 10.500" fill="none" stroke="#dfeaf2" strokeWidth="1" opacity=".8" />
  </Icon>
);

const GEAR = Array.from({ length: 8 }, (_, i) => i * 45);
const SaveIcon = () => (
  <Icon>
    <defs>
      <VGrad id="sv" stops={[[0, "#4c5664"], [1, "#20242c"]]} />
      <VGrad id="sp" stops={[[0, "#ffffff"], [0.5, "#eef1f6"], [0.55, "#d8dee8"], [1, "#e6eaf0"]]} />
      <VGrad id="gr1" stops={[[0, "#f4f4f4"], [1, "#c4c4c4"]]} />
    </defs>
    <path d="M2 .5H42.500V42H5L2 39Z" fill="url(#sv)" />
    <rect x="7" y="1" width="29" height="20.500" fill="url(#sp)" />
    <path d="M11 27H33V41H11Z" fill="#c9ccd0" />
    <rect x="14" y="30" width="6" height="9" fill="#30353d" />
    <g fill="url(#gr1)" stroke="#bdbdbd" strokeWidth=".6">
      {GEAR.map((a) => (
        <rect key={a} x="28.500" y="14.500" width="6" height="8" rx="1.500" transform={`rotate(${a} 31.500 30.500)`} />
      ))}
      <circle cx="31.500" cy="30.500" r="11.500" />
    </g>
    <circle cx="31.500" cy="30.500" r="11" fill="#dedede" />
    <circle cx="31.500" cy="30.500" r="4.500" fill="#666" stroke="#f2f2f2" strokeWidth="2" />
    <ellipse cx="32" cy="46" rx="10" ry="1.500" fill="#000" opacity=".15" />
  </Icon>
);

const LensIcon = ({ plus }: { plus?: boolean }) => (
  <Icon>
    <defs>
      <radialGradient id="le" cx=".5" cy=".75" r=".8">
        <stop offset="0" stopColor="#c4e2ff" />
        <stop offset=".4" stopColor="#eaf4ff" />
        <stop offset="1" stopColor="#fdfdfd" />
      </radialGradient>
      <VGrad id="ba" stops={[[0, "#7a9ae8"], [0.45, "#2344b4"], [0.5, "#001a80"], [1, "#0a50d8"]]} />
    </defs>
    <path d="M27 25L42.500 41.500" stroke="#8c8c8c" strokeWidth="4.800" strokeLinecap="round" />
    <path d="M27.500 25L42.500 41" stroke="#e2e2e2" strokeWidth="2.600" strokeLinecap="round" />
    <path d="M29 28L41.500 42.500" stroke="#9c9c9c" strokeWidth="1" />
    <circle cx="16.700" cy="14.500" r="13.200" fill="url(#le)" stroke="#8e8e8e" strokeWidth="2" />
    <circle cx="16.700" cy="14.500" r="12" fill="none" stroke="#fff" strokeWidth=".8" />
    <circle cx="9.500" cy="37" r="9.400" fill="url(#ba)" />
    <path d={plus ? "M4.500 37H14.500M9.500 32V42" : "M4.500 37H14.500"} stroke="#fff" strokeWidth="2.200" />
  </Icon>
);

const FastIcon = ({ flip }: { flip?: boolean }) => (
  <Icon>
    <defs>
      <VGrad id="fa" stops={[[0, "#1c7ee0"], [0.2, "#26a8f6"], [0.48, "#1ca6fc"], [0.52, "#1068c8"], [0.8, "#1a90ec"], [1, "#0a28d0"]]} />
    </defs>
    <g transform={flip ? "translate(47.500 0) scale(-1 1)" : undefined}>
      <path d="M16.500 23.500L46.500 1.500V45.500Z" fill="url(#fa)" stroke="#1058d0" strokeWidth="1.500" />
      <path d="M.5 23.500L31 1.500V45.500Z" fill="url(#fa)" stroke="#1058d0" strokeWidth="1.500" />
      <path d="M29.500 5V42M45 5V42" stroke="#a4dcff" strokeWidth="1" />
      <path d="M27 14L19 23.500L28 34" fill="none" stroke="#9ad4ff" strokeWidth="1" opacity=".6" />
    </g>
  </Icon>
);

const WidthIcon = () => (
  <Icon>
    <defs>
      <VGrad id="wi" stops={[[0, "#4cbcf8"], [0.45, "#22a2f4"], [0.55, "#1274d4"], [1, "#2a9cf0"]]} />
    </defs>
    <path d="M5.500 23.500L15.500 14.500V20H30.500V14.500L40.500 23.500L30.500 33V27H15.500V33Z" fill="url(#wi)" />
  </Icon>
);

const PeakIcon = () => (
  <Icon>
    <defs>
      <linearGradient id="pk">
        <stop offset="0" stopColor="#a80000" />
        <stop offset=".45" stopColor="#ff2a2a" />
        <stop offset="1" stopColor="#8a0000" />
      </linearGradient>
    </defs>
    <rect x=".5" y="3.500" width="46.500" height="37" fill="#fff" stroke="#ccd4e0" strokeWidth="1.600" />
    <rect x="0" y="3" width="47.500" height="3" fill="#b8c4d6" />
    <path d="M36 4.500H45" stroke="#7c94b8" strokeWidth="1.200" strokeDasharray="2 1" />
    <path d="M24 13.500L39 35H9Z" fill="url(#pk)" stroke="#7a0000" strokeWidth="1" />
  </Icon>
);

const HelpIcon = () => (
  <Icon>
    <ellipse cx="24" cy="24" rx="16.500" ry="17" fill="none" stroke="#f4f4f4" strokeWidth="11" />
    <circle cx="24" cy="23.500" r="16.500" fill="none" stroke="#ee5a22" strokeWidth="11" strokeDasharray="17 8.920" strokeDashoffset="-5" />
    <circle cx="24" cy="23.500" r="18.500" fill="none" stroke="#ff9060" strokeWidth="2" strokeDasharray="19.060 10" strokeDashoffset="-5.600" opacity=".7" />
    <circle cx="24" cy="23.500" r="22" fill="none" stroke="#b8b8b8" strokeWidth="1" />
    <circle cx="24" cy="23.500" r="11" fill="#f3f0eb" stroke="#b0a8a4" strokeWidth="1" />
  </Icon>
);

const Sep = ({ cls }: { cls: string }) => <div className={"w-px bg-[#c9c4be] " + cls} />;

/* ------------------------------------------------------------------ */
/* Window chrome                                                       */
/* ------------------------------------------------------------------ */

function TitleBar() {
  return (
    <div className="grid h-[55px] grid-cols-[1fr_auto_1fr] items-center bg-linear-to-b from-[#3c3a35] to-[#4b4943]">
      <div />
      <div className="pb-[3px] font-['Noto_Sans',sans-serif] text-[27px] leading-none font-bold tracking-[1px] text-[#dfdbd2]">
        ViTE :: paje.trace
      </div>
      <div className="flex items-center justify-end gap-2 pr-[10px]">
        {["min", "max", "close"].map((k) => (
          <svg key={k} viewBox="0 0 32 32" className="size-8 overflow-visible">
            <defs>
              <VGrad id={"wb" + k} stops={k === "close" ? [[0, "#f4825a"], [0.6, "#e95420"], [1, "#e2501c"]] : [[0, "#8c8b84"], [1, "#5e5d57"]]} />
            </defs>
            <circle cx="16" cy="15.500" r="16.500" fill={"url(#wb" + k + ")"} stroke="#32302c" strokeWidth="1.500" />
            {k === "min" && <path d="M8 16.500H24" stroke="#35332f" strokeWidth="2" />}
            {k === "max" && <rect x="9" y="10.500" width="14" height="10" fill="none" stroke="#35332f" strokeWidth="2" />}
            {k === "close" && <path d="M10.500 10L21.500 21M21.500 10L10.500 21" stroke="#3c2c14" strokeWidth="2.200" />}
          </svg>
        ))}
      </div>
    </div>
  );
}

const MENU: [string, string][] = [
  ["File", "w-[45px]"],
  ["View", "w-[54px]"],
  ["Preferences", "w-[102.5px]"],
  ["Help", "w-[40px]"],
];

function MenuBar() {
  return (
    <div className="flex h-[21px] items-center pl-[17px] text-[14.5px] leading-none whitespace-nowrap text-[#111]">
      {MENU.map(([m, w]) => (
        <div key={m} className={w}>
          <span className="underline decoration-2 underline-offset-2">{m[0]}</span>
          {m.slice(1)}
        </div>
      ))}
    </div>
  );
}

function ToolBar() {
  return (
    <div className="flex h-[71px] items-start border-t border-b border-t-[#d2cec9] border-b-[#b3aeaa] bg-linear-to-b from-[#f8f5f0] to-[#eeebe7] pt-[11px] pl-[14px]">
      <div className="mt-4 mr-[13px] h-4 w-1 border-x border-dotted border-[#b0aba6]" />
      <div className="flex gap-[10px]">
        <OpenIcon />
        <ReloadIcon />
        <CloseIcon />
        <SaveIcon />
      </div>
      <Sep cls="mt-[3px] mr-[11px] ml-[13px] h-[43px]" />
      <div className="flex gap-[10px]">
        <LensIcon plus />
        <LensIcon />
        <FastIcon />
        <FastIcon flip />
        <WidthIcon />
        <PeakIcon />
      </div>
      <Sep cls="mt-[3px] mr-[11px] ml-[11px] h-[43px]" />
      <HelpIcon />
      <div className="mt-3 ml-[5px] flex h-6 w-[84px] items-center justify-center rounded-[3px] border border-[#b3aea9] bg-[#dedad6] text-[14px] whitespace-nowrap text-[#222]">
        No arrows
      </div>
      <div className="mt-3 ml-[9px] flex h-6 items-center text-[14px] whitespace-nowrap text-[#111]">No events</div>
    </div>
  );
}

const Arrow = ({ d }: { d: string }) => (
  <svg viewBox="0 0 8 8" className="size-2">
    <path d={d} fill="#55524e" />
  </svg>
);

function VScroll() {
  return (
    <div className="flex h-[1866px] w-7 flex-col border-l border-[#b4afab] bg-[#e4e3df]">
      <div className="flex h-7 items-center justify-center border-b border-[#b8b4b0] bg-linear-to-r from-white to-[#f0eeeb]">
        <Arrow d="M0 6L4 2L8 6Z" />
      </div>
      <div className="h-[53px] border-b border-[#b8b4b0] bg-linear-to-r from-white to-[#f0eeeb]" />
      <div className="grow" />
      <div className="flex h-7 items-center justify-center border-t border-[#b8b4b0] bg-linear-to-r from-white to-[#f0eeeb]">
        <Arrow d="M0 2L4 6L8 2Z" />
      </div>
    </div>
  );
}

function BottomBar() {
  return (
    <div className="flex h-[71px] items-start pt-3 pl-[19px] text-[14.5px] leading-none whitespace-nowrap text-[#222]">
      <div className="flex h-[43px] w-[178px] items-center">Scale containers/states:</div>
      <div className="flex h-[42px] w-[82px] items-center">
        <div className="h-3 w-[11px] rounded-l-[2px] border border-r-0 border-[#2573a8] bg-[#3b9fe0]" />
        <div className="h-[28px] w-7 rounded-[4px] border border-[#aaa6a2] bg-linear-to-b from-white to-[#f3f1ef]" />
        <div className="h-3 grow rounded-r-[2px] border border-l-0 border-[#b4afab] bg-linear-to-b from-[#cbc8c4] to-[#e2dfdb]" />
      </div>
      <div className="ml-[13px] h-[42px] w-px bg-[#aaa6a2]" />
      <div className="ml-[14px] flex h-[43px] w-[126px] items-center">Change position:</div>
      <div className="mt-[7px] flex h-7 w-[3043px] border-t border-[#b4afab] bg-[#e4e3df]">
        <div className="flex w-[27px] items-center justify-center border-r border-[#c4c0bc] bg-linear-to-b from-white to-[#f0eeeb]">
          <Arrow d="M6 0L2 4L6 8Z" />
        </div>
        <div className="w-[1743px]" />
        <div className="w-[54px] border-x border-[#b8b4b0] bg-linear-to-b from-white to-[#f0eeeb]" />
        <div className="grow" />
        <div className="flex w-7 items-center justify-center border-l border-[#b8b4b0] bg-linear-to-b from-white to-[#f0eeeb]">
          <Arrow d="M2 0L6 4L2 8Z" />
        </div>
      </div>
      <div className="ml-3 h-[42px] w-px bg-[#aaa6a2]" />
      <div className="ml-[14px] flex h-[43px] w-[58px] items-center">Zoom:</div>
      <div className="flex h-[42px] w-[128px] rounded-[4px] border border-[#a6a29e] bg-white">
        <div className="flex grow items-center pl-1 text-[15.5px] italic">696%</div>
        <div className="flex w-5 items-center justify-center rounded-r-[3px] border-l border-[#b4afab] bg-linear-to-b from-[#fbfafa] to-[#eceae7]">
          <Arrow d="M0 2L4 6L8 2Z" />
        </div>
      </div>
    </div>
  );
}

export default function App() {
  return (
    <div className="h-[2160px] w-[3840px] overflow-hidden bg-white pt-7 pl-[65px] font-['Open_Sans',sans-serif]">
      <div className="flex h-[2103px] w-[3709px] flex-col border-l-2 border-[#463a38] bg-[#efebe7]">
        <TitleBar />
        <MenuBar />
        <ToolBar />
        <div className="flex gap-3 pt-[19px] pl-[19px]">
          <TraceView />
          <VScroll />
        </div>
        <BottomBar />
      </div>
    </div>
  );
}
